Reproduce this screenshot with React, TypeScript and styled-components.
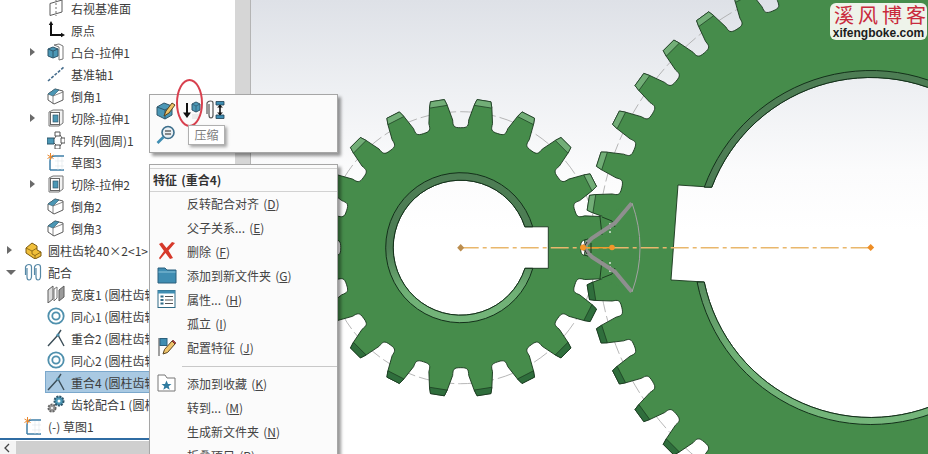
import * as React from 'react'
import styled, {createGlobalStyle} from 'styled-components'

const GlobalStyle = createGlobalStyle`
  html, body {
    margin: 0;
    padding: 0;
    background: #fff;
  }
`

const Page = styled.div`
  position: relative;
  display: flex;
  width: 928px;
  height: 454px;
  overflow: hidden;
  font-family: "Noto Sans CJK SC", "Liberation Sans", sans-serif;
  font-size: 12px;
  color: #3c3c3c;
`

/* ---------- feature tree ---------- */

const Panel = styled.div`
  display: flex;
  flex-direction: column;
  flex: 0 0 251px;
  width: 251px;
  min-width: 0;
  height: 454px;
  overflow: hidden;
  border-right: 1px solid #b4b4b4;
  box-sizing: border-box;
  background: #fff;
`
const PanelBody = styled.div`
  display: flex;
  flex: 0 0 440px;
  min-height: 0;
  overflow: hidden;
  box-sizing: border-box;
  border-bottom: 2px solid #2f6ca3;
`
const Tree = styled.div`
  flex: 1;
  min-width: 0;
  margin-top: -3px;
  overflow: hidden;
`
const VScroll = styled.div`
  flex: 0 0 15px;
  background: #d6d6d6;
`
const HScroll = styled.div`
  display: flex;
  flex: 1;
  margin-top: 1px;
  background: #cfcfcf;
`
const ScrollArrow = styled.div`
  flex: 0 0 16px;
  background: #f4f4f4;
  display: flex;
  align-items: center;
  justify-content: center;
  padding-right: 3px;
  box-sizing: border-box;
`
const Row = styled.div<{$level: number}>`
  display: flex;
  align-items: center;
  height: 22px;
  padding-left: ${p => (p.$level === 1 ? 5 : 28)}px;
  white-space: nowrap;
`
const Toggle = styled.span`
  flex: 0 0 19px;
  display: flex;
  padding-left: 2px;
  box-sizing: border-box;
`
const Caret = styled.span<{$open?: boolean}>`
  width: 0;
  height: 0;
  ${p =>
    p.$open
      ? `border-left: 5px solid transparent;
         border-right: 5px solid transparent;
         border-top: 5px solid #6a6a6a;
         margin-left: -1px;`
      : `border-top: 4.5px solid transparent;
         border-bottom: 4.5px solid transparent;
         border-left: 5px solid #6a6a6a;`}
`
const Label = styled.div<{$selected?: boolean}>`
  display: flex;
  align-items: center;
  gap: 6px;
  flex: 1;
  min-width: 0;
  height: 22px;
  margin-left: -2px;
  padding-left: 2px;
  box-sizing: border-box;
  background: ${p => (p.$selected ? '#a9c9e2' : 'transparent')};
  box-shadow: ${p => (p.$selected ? 'inset 0 0 0 1px #7ba8cc' : 'none')};
`
const LabelText = styled.span<{$level: number}>`
  display: block;
  overflow: hidden;
  max-width: ${p => (p.$level === 1 ? 101 : 78)}px;
`
const IconBox = styled.svg`
  flex: 0 0 18px;
  width: 18px;
  height: 18px;
  display: block;
`

/* ---------- pop-ups ---------- */

const Toolbar = styled.div`
  position: absolute;
  left: 149px;
  top: 94px;
  width: 189px;
  height: 59px;
  box-sizing: border-box;
  padding: 5px 6px;
  background: #fbfbfb;
  border: 1px solid #a6a6a6;
  box-shadow: 3px 3px 3px rgba(0, 0, 0, 0.4);
  display: grid;
  grid-template-columns: repeat(3, 20px);
  grid-auto-rows: 20px;
  gap: 5px;
`
const ToolIcon = styled.svg`
  width: 20px;
  height: 20px;
  display: block;
`
const Tooltip = styled.div`
  position: absolute;
  left: 188px;
  top: 125px;
  width: 37px;
  height: 20px;
  box-sizing: border-box;
  border: 1px solid #b0b0b0;
  background: #fff;
  box-shadow: 2px 2px 3px rgba(0, 0, 0, 0.35);
  color: #7d7d7d;
  text-align: center;
  line-height: 18px;
`
const RedMark = styled.div`
  position: absolute;
  left: 176px;
  top: 79px;
  width: 27px;
  height: 48px;
  box-sizing: border-box;
  border: 2px solid #d8404e;
  border-radius: 50%;
`
const Menu = styled.div`
  position: absolute;
  left: 149px;
  top: 164px;
  width: 189px;
  height: 310px;
  box-sizing: border-box;
  padding-top: 3px;
  background: #fbfbfb;
  border: 1px solid #a6a6a6;
  box-shadow: 3px 3px 3px rgba(0, 0, 0, 0.4);
`
const MenuTitle = styled.div`
  height: 22px;
  line-height: 22px;
  padding-left: 3px;
  border-top: 1px solid #d2d2d2;
  border-bottom: 1px solid #d2d2d2;
  font-weight: 700;
  word-spacing: 1.5px;
  color: #333;
`
const MenuItem = styled.div`
  display: grid;
  grid-template-columns: 37px 1fr;
  align-items: center;
  height: 24px;
  padding-bottom: 2px;
  box-sizing: border-box;
  color: #444;
  white-space: nowrap;
  word-spacing: 1.5px;
  u {
    text-underline-offset: 1px;
  }
`
const MenuIconSlot = styled.span`
  padding-left: 7px;
`
const MenuDivider = styled.div`
  height: 1px;
  margin: 6px 0 5px 32px;
  background: #c8c8c8;
`

/* ---------- graphics area ---------- */

const Viewport = styled.div`
  flex: 0 0 677px;
  min-width: 0;
  overflow: hidden;
  background: linear-gradient(#dee1e7 0, #eef0f3 90px, #fbfbfc 170px, #fff 230px);
`
const Scene = styled.svg`
  display: block;
  width: 677px;
  height: 454px;
`
const Watermark = styled.div`
  position: absolute;
  right: 1px;
  top: 3px;
  width: 97px;
  height: 37px;
  box-sizing: border-box;
  padding-top: 1px;
  background: #eef3ea;
  border-radius: 6px;
  text-align: center;
`
const WatermarkTitle = styled.div`
  height: 22px;
  line-height: 22px;
  font-size: 20px;
  letter-spacing: 4px;
  padding-left: 4px;
  color: #c92a3c;
  white-space: nowrap;
  margin-bottom: 1px;
`
const WatermarkUrl = styled.div`
  line-height: 13px;
  font-family: "Liberation Sans", sans-serif;
  font-weight: 700;
  font-size: 12px;
  color: #1c1c1c;
`

/* ---------- gear geometry ---------- */

type GearSpec = {
  cx: number
  cy: number
  pitch: number
  offset: number
  rt: number
  rc: number
  r1: number
  rr: number
  ht: number
  hc: number
  h1: number
}

const pt = (g: {cx: number; cy: number}, r: number, deg: number) => {
  const t = (deg * Math.PI) / 180
  return `${(g.cx + r * Math.cos(t)).toFixed(2)} ${(g.cy - r * Math.sin(t)).toFixed(2)}`
}

const small: GearSpec = {cx: 460.7, cy: 247.7, pitch: 18, offset: 9, rt: 149, rc: 143, r1: 128, rr: 120, ht: 2.7, hc: 3.6, h1: 5.4}
const big: GearSpec = {cx: 870.7, cy: 247.5, pitch: 9, offset: 0, rt: 286, rc: 280, r1: 264, rr: 256, ht: 1.5, hc: 1.9, h1: 2.7}

const outline = (g: GearSpec) => {
  const n = Math.round(360 / g.pitch)
  const half = g.pitch / 2
  const rm = g.rr + (g.r1 - g.rr) * 0.3
  let d = `M${pt(g, g.rr, g.offset - half)}`
  for (let i = 0; i < n; i++) {
    const a = g.offset + i * g.pitch
    d += `C${pt(g, g.rr, a - g.h1)} ${pt(g, rm, a - g.h1)} ${pt(g, g.r1, a - g.h1)}`
    d += `L${pt(g, g.rc, a - g.hc)}L${pt(g, g.rt, a - g.ht)}L${pt(g, g.rt, a + g.ht)}L${pt(g, g.rc, a + g.hc)}L${pt(g, g.r1, a + g.h1)}`
    d += `C${pt(g, rm, a + g.h1)} ${pt(g, g.rr, a + g.h1)} ${pt(g, g.rr, a + half)}`
  }
  return d + 'Z'
}

const tipBands = (g: GearSpec) => {
  const n = Math.round(360 / g.pitch)
  const out: {d: string; fill: string}[] = []
  for (let i = 0; i < n; i++) {
    const a = g.offset + i * g.pitch
    const up = Math.sin((a * Math.PI) / 180) > 0
    out.push({
      d: `M${pt(g, g.rc, a - g.hc)}L${pt(g, g.rt, a - g.ht)}L${pt(g, g.rt, a + g.ht)}L${pt(g, g.rc, a + g.hc)}Z`,
      fill: up ? '#72ae77' : '#2f6e3c',
    })
  }
  return out
}

type Key = {side: 1 | -1; top: number; bottom: number; corners: [number, number][]}

const edgeX = (g: {cx: number; cy: number}, r: number, y: number, side: number) =>
  g.cx + side * Math.sqrt(r * r - (y - g.cy) * (y - g.cy))

const holePath = (g: GearSpec, r: number, k: Key) => {
  const sweep = k.side > 0 ? 0 : 1
  const body = `M${edgeX(g, r, k.top, k.side)} ${k.top}A${r} ${r} 0 1 ${sweep} ${edgeX(g, r, k.bottom, k.side)} ${k.bottom}`
  return body + k.corners.map(c => `L${c[0]} ${c[1]}`).join('') + 'Z'
}

const ringPath = (g: GearSpec, ro: number, ri: number, k: Key) => {
  const sweep = k.side > 0 ? 0 : 1
  return (
    `M${edgeX(g, ro, k.top, k.side)} ${k.top}A${ro} ${ro} 0 1 ${sweep} ${edgeX(g, ro, k.bottom, k.side)} ${k.bottom}` +
    `L${edgeX(g, ri, k.bottom, k.side)} ${k.bottom}A${ri} ${ri} 0 1 ${1 - sweep} ${edgeX(g, ri, k.top, k.side)} ${k.top}Z`
  )
}

const smallKey: Key = {side: 1, top: 226.8, bottom: 268.3, corners: [[548.3, 268.3], [548.3, 226.8]]}
const bigKey: Key = {side: -1, top: 187.2, bottom: 282, corners: [[671, 280], [678, 185]]}

const Gear: React.FC<{g: GearSpec; k: Key; ro: number; ri: number}> = ({g, k, ro, ri}) => (
  <g strokeLinejoin="round">
    <path d={outline(g) + holePath(g, ri, k)} fillRule="evenodd" fill="#468c4b" stroke="#17351c" strokeWidth={0.9} />
    {tipBands(g).map((b, i) => (
      <path key={i} d={b.d} fill={b.fill} stroke="#17351c" strokeWidth={0.7} />
    ))}
    <path d={ringPath(g, ro, ri, k)} fill="url(#ringShade)" stroke="#13301a" strokeWidth={1} />
  </g>
)

const GearScene: React.FC = () => (
  <Scene viewBox="251 0 677 454">
    <defs>
      <linearGradient id="ringShade" x1="0" y1="0" x2="0" y2="1">
        <stop offset="0" stopColor="#4d7d54" />
        <stop offset="0.5" stopColor="#4d7d54" />
        <stop offset="0.8" stopColor="#6fb075" />
        <stop offset="1" stopColor="#74b57a" />
      </linearGradient>
    </defs>
    <circle cx={460.7} cy={247.7} r={136} fill="none" stroke="#a4a4a4" strokeWidth={0.8} strokeDasharray="16 4" />
    <circle cx={870.7} cy={247.5} r={273} fill="none" stroke="#a4a4a4" strokeWidth={0.8} strokeDasharray="18 4" />
    <Gear g={small} k={smallKey} ro={75} ri={67.5} />
    <Gear g={big} k={bigKey} ro={177} ri={170} />
    {/* the two gears overlap where they mesh, so it reads as solid green */}
    <path d="M588 222L600 217L628 205V290L600 278L588 273Z" fill="#468c4b" />
    <path d="M600 217L602 235M602 217L612 221L615 227M600 278L602 260M602 278L612 274L615 268" fill="none" stroke="#17351c" strokeWidth={0.9} />
    <path d="M610 223V233M610 262V272" stroke="#fff" strokeWidth={1.2} strokeDasharray="2 2" />
    <path d="M460.7 247.7H870" fill="none" stroke="#e9b76c" strokeWidth={1.4} strokeDasharray="18 4 4 4" />
    <path d="M583 247.7H612" stroke="#ef9a2a" strokeWidth={1.4} />
    <path d="M631.7 203.3L615 223L591.7 238.3L583 247.5L591.7 256.7L615 271.7L631.7 291.7" fill="none" stroke="#8f8f8f" strokeWidth={4} strokeLinejoin="round" />
    <path d="M632 203Q648 248 632 292" fill="none" stroke="#a3a3a3" strokeWidth={1} />
    <path d="M587 242Q582 248 587 254M591 243V253" fill="none" stroke="#1c2a1c" strokeWidth={0.9} />
    <circle cx={583} cy={247.5} r={3} fill="#f3962a" />
    <circle cx={612} cy={247.5} r={2.8} fill="#f3962a" />
    <path d="M460.7 244l3.5 3.7-3.5 3.7-3.5-3.7z" fill="#bb8d4e" />
    <path d="M870.7 244l3.5 3.5-3.5 3.5-3.5-3.5z" fill="#ee8d25" />
  </Scene>
)

/* ---------- icons ---------- */

const blue = '#4b97b5'

const drawings: Record<string, React.ReactNode> = {
  plane: (
    <>
      <path d="M3 4.5L15 1V13L3 16.5Z" fill="#fff" stroke="#5b5b5b" />
      <path d="M9 0V17" stroke="#6d6d6d" strokeDasharray="2 2" />
    </>
  ),
  origin: (
    <>
      <path d="M4 2V14H16" fill="none" stroke="#111" strokeWidth={2} />
      <path d="M4 0L1.8 4H6.2ZM18 14L14 11.8V16.2Z" fill="#111" />
    </>
  ),
  extrude: (
    <>
      <path d="M7 2L12 1L16 3V16L12 17V4Z" fill="#fff" stroke="#777" />
      <path d="M1 6L6 4L11 6V13L6 15L1 13Z" fill={blue} stroke="#2f566b" />
      <path d="M1 6L6 8L11 6M6 8V15" fill="none" stroke="#2f566b" />
    </>
  ),
  axis: <path d="M1 16L17 2" stroke="#456c8c" strokeWidth={1.6} strokeDasharray="3 1.4" />,
  chamfer: (
    <>
      <path d="M1 7L8 2L16 4V13L7 17L1 13Z" fill="#fff" stroke="#5c5c5c" />
      <path d="M1 7L8 2L12 3L6 9Z" fill={blue} stroke="#3a6477" strokeWidth={0.7} />
      <path d="M6 9V17M6 9L16 5" fill="none" stroke="#6a6a6a" strokeWidth={0.8} />
    </>
  ),
  cut: (
    <>
      <path d="M2 3L6 1H16V14L12 17H2Z" fill="#f2f2f2" stroke="#777" />
      <rect x={3.5} y={3.5} width={9} height={12} fill="#fff" stroke="#666" />
      <rect x={6} y={6} width={5} height={7} fill={blue} stroke="#2f566b" strokeWidth={0.7} />
    </>
  ),
  pattern: (
    <>
      <path d="M0 7H7V13H0Z" fill={blue} stroke="#2f566b" />
      <path d="M8 1H13V5H8ZM8 14H13V18H8ZM14 7H18V12H14Z" fill="#fff" stroke="#555" />
      <path d="M7 8L9 5M7 12L9 14M13 4L15 7M13 15L15 12" stroke="#555" />
    </>
  ),
  sketch: (
    <>
      <path d="M3 17V8Q3 3 8 3H17M3 17H17" fill="none" stroke="#3f7fa8" strokeWidth={1.5} />
      <path d="M8 8H17M8 13H17M11 4V17M15 4V17" stroke="#dfe6ea" strokeWidth={0.6} />
      <path d="M3.5 0V7M0.5 2L6.5 5.5M6.5 2L0.5 5.5" stroke="#e8862c" strokeWidth={1} />
    </>
  ),
  part: (
    <>
      <path d="M2 7L8 2L13 5V9L17 11V15L11 18L2 12Z" fill="#f0bf3a" stroke="#7c5a10" />
      <path d="M2 7L8 10V13L11 14.5V18M8 10L13 7M11 14.5L17 11" fill="none" stroke="#7c5a10" strokeWidth={0.8} />
    </>
  ),
  mates: (
    <>
      <path d="M3 5V14Q3 17 5 17T7.5 14V4Q7.5 1.5 5 1.5T1.5 4V12" fill="none" stroke="#5688a6" strokeWidth={1.2} />
      <path d="M12 5V14Q12 17 14 17T16.5 14V4Q16.5 1.5 14 1.5T10.5 4V12" fill="none" stroke="#5688a6" strokeWidth={1.2} />
    </>
  ),
  width: (
    <>
      <path d="M1 5L6 1V14L1 18Z" fill="#dcdcdc" stroke="#5d5d5d" />
      <path d="M7 4L10 2V13L7 16Z" fill="#fff" stroke="#777" />
      <path d="M12 5L17 1V12L12 16Z" fill="#9b9b9b" stroke="#5d5d5d" />
    </>
  ),
  concentric: (
    <>
      <circle cx={9} cy={9} r={7.7} fill="none" stroke="#4f90ad" strokeWidth={1.8} />
      <circle cx={9} cy={9} r={3.7} fill="none" stroke="#4f90ad" strokeWidth={1.8} />
    </>
  ),
  coincident: (
    <>
      <path d="M1 17L11 6L17 17" fill="none" stroke="#3c4e58" strokeWidth={1.4} />
      <path d="M10 7L14 1" stroke="#3c4e58" strokeWidth={1.4} />
      <circle cx={11} cy={6} r={1.6} fill="#4f90ad" />
    </>
  ),
  gearMate: (
    <>
      <circle cx={12} cy={6} r={4.5} fill={blue} stroke="#2f566b" strokeWidth={2} strokeDasharray="2 1" />
      <circle cx={12} cy={6} r={1.5} fill="#fff" />
      <circle cx={5} cy={13} r={3.6} fill="#9b9b9b" stroke="#666" strokeWidth={1.8} strokeDasharray="2 1" />
      <circle cx={5} cy={13} r={1.1} fill="#fff" />
    </>
  ),
}

const TreeIcon: React.FC<{name: string}> = ({name}) => <IconBox viewBox="0 0 18 18">{drawings[name]}</IconBox>

const menuDrawings: Record<string, React.ReactNode> = {
  remove: <path d="M2 3L5 1.5L9.5 7L15 1L18 2L11.5 9.5L16 17L13 18L8.5 12L3 18.5L2 17L7 10Z" fill="#d6392b" />,
  folder: (
    <>
      <path d="M1 3H8L10 5H19V18H1Z" fill="#3f8db2" stroke="#2a5f7c" />
      <path d="M1.5 7H18.5" stroke="#8cc3da" />
    </>
  ),
  props: (
    <>
      <rect x={1} y={1.5} width={17} height={17} fill="#fff" stroke="#2f6a86" />
      <rect x={1} y={1.5} width={17} height={3} fill="#3f8db2" />
      <path d="M3.5 7.5H6.5M3.5 11H6.5M3.5 14.500H6.5" stroke="#2f6a86" strokeWidth={2} />
      <path d="M8 7.500H16M8 11H16M8 14.500H16" stroke="#555" />
    </>
  ),
  config: (
    <>
      <path d="M2 1V19" stroke="#444" />
      <rect x={3} y={1.500} width={7} height={7} fill="#3f8db2" stroke="#2a5f7c" />
      <path d="M6 17L7.500 12.500L15 4L18 7L10.500 15.500Z" fill="#eec36a" stroke="#5a4520" />
      <path d="M15 4L16 3L19 6L18 7Z" fill="#b8413c" stroke="#5a2020" strokeWidth={0.6} />
    </>
  ),
  favorite: (
    <>
      <path d="M1 2H8L10 5H18V18H1Z" fill="#fff" stroke="#777" />
      <path d="M9.500 7.500L11 11H14.500L11.700 13.200L12.700 16.700L9.500 14.700L6.300 16.700L7.300 13.200L4.500 11H8Z" fill="#2f7ba0" />
    </>
  ),
}

const MenuIcon: React.FC<{name?: string}> = ({name}) => (
  <MenuIconSlot>{name ? <ToolIcon viewBox="0 0 20 20">{menuDrawings[name]}</ToolIcon> : null}</MenuIconSlot>
)

/* ---------- data ---------- */

type TreeRow = {level: number; icon: string; text: string; caret?: 'open' | 'closed'; selected?: boolean}

const rows: TreeRow[] = [
  {level: 2, icon: 'plane', text: '右视基准面'},
  {level: 2, icon: 'origin', text: '原点'},
  {level: 2, icon: 'extrude', text: '凸台-拉伸1', caret: 'closed'},
  {level: 2, icon: 'axis', text: '基准轴1'},
  {level: 2, icon: 'chamfer', text: '倒角1'},
  {level: 2, icon: 'cut', text: '切除-拉伸1', caret: 'closed'},
  {level: 2, icon: 'pattern', text: '阵列(圆周)1'},
  {level: 2, icon: 'sketch', text: '草图3'},
  {level: 2, icon: 'cut', text: '切除-拉伸2', caret: 'closed'},
  {level: 2, icon: 'chamfer', text: '倒角2'},
  {level: 2, icon: 'chamfer', text: '倒角3'},
  {level: 1, icon: 'part', text: '圆柱齿轮40×2<1>', caret: 'closed'},
  {level: 1, icon: 'mates', text: '配合', caret: 'open'},
  {level: 2, icon: 'width', text: '宽度1 (圆柱齿轮'},
  {level: 2, icon: 'concentric', text: '同心1 (圆柱齿轮'},
  {level: 2, icon: 'coincident', text: '重合2 (圆柱齿轮'},
  {level: 2, icon: 'concentric', text: '同心2 (圆柱齿轮'},
  {level: 2, icon: 'coincident', text: '重合4 (圆柱齿轮', selected: true},
  {level: 2, icon: 'gearMate', text: '齿轮配合1 (圆柱'},
  {level: 1, icon: 'sketch', text: '(-) 草图1'},
]

type Entry = {text: string; key: string; icon?: string} | 'divider'

const menuEntries: Entry[] = [
  {text: '反转配合对齐', key: 'D'},
  {text: '父子关系...', key: 'E'},
  {text: '删除', key: 'F', icon: 'remove'},
  {text: '添加到新文件夹', key: 'G', icon: 'folder'},
  {text: '属性...', key: 'H', icon: 'props'},
  {text: '孤立', key: 'I'},
  {text: '配置特征', key: 'J', icon: 'config'},
  'divider',
  {text: '添加到收藏', key: 'K', icon: 'favorite'},
  {text: '转到...', key: 'M'},
  {text: '生成新文件夹', key: 'N'},
  {text: '折叠项目', key: 'P'},
]

export default function App() {
  return (
    <Page>
      <GlobalStyle />
      <Panel>
        <PanelBody>
          <Tree>
            {rows.map((r, i) => (
              <Row key={i} $level={r.level}>
                <Toggle>{r.caret ? <Caret $open={r.caret === 'open'} /> : null}</Toggle>
                <Label $selected={r.selected}>
                  <TreeIcon name={r.icon} />
                  <LabelText $level={r.level}>{r.text}</LabelText>
                </Label>
              </Row>
            ))}
          </Tree>
          <VScroll />
        </PanelBody>
        <HScroll>
          <ScrollArrow>
            <svg width="6" height="10" viewBox="0 0 6 10">
              <path d="M5 1L1 5L5 9" fill="none" stroke="#444" strokeWidth={1.3} />
            </svg>
          </ScrollArrow>
        </HScroll>
      </Panel>
      <Viewport>
        <GearScene />
      </Viewport>

      <Toolbar>
        <ToolIcon viewBox="0 0 20 20">
          <path d="M1 7L8 3L16 6V15L9 19L1 15Z" fill="#4b97b5" stroke="#2f566b" />
          <path d="M1 7L9 10V19M9 10L16 6" fill="none" stroke="#2f566b" />
          <path d="M8 16L10 11L16 3L19 5L13 13Z" fill="#eec36a" stroke="#5a4520" />
        </ToolIcon>
        <ToolIcon viewBox="0 0 20 20">
          <path d="M6 3V14" stroke="#111" strokeWidth={2} />
          <path d="M2 12.500H10L6 18Z" fill="#111" />
          <path d="M11 4L15 2L19 4V10L15 12L11 10Z" fill="#4b97b5" stroke="#2f566b" />
          <path d="M11 4L15 6L19 4M15 6V12" fill="none" stroke="#2f566b" strokeWidth={0.7} />
          <path d="M11 14H18V19H11Z" fill="#ececec" />
        </ToolIcon>
        <ToolIcon viewBox="0 0 20 20">
          <path d="M3 4V15Q3 18 5 18T7 15V3Q7 1 4.500 1T1 3V14" fill="none" stroke="#555" strokeWidth={1.2} />
          <path d="M10 1.500H18V5H10ZM10 15H18V18.500H10Z" fill="#3f8db2" stroke="#1e3f52" strokeWidth={0.8} />
          <path d="M14 5V15" stroke="#111" strokeWidth={1.6} />
          <path d="M11 7.500L14 5L17 7.500ZM11 12.500L14 15L17 12.500Z" fill="#111" />
        </ToolIcon>
        <ToolIcon viewBox="0 0 20 20">
          <circle cx={12} cy={7.500} r={6} fill="#e8eef2" stroke="#3d6f8c" strokeWidth={1.600} />
          <path d="M9 6H15M9 9H15" stroke="#222" strokeWidth={1.200} />
          <path d="M7.500 12L1.500 18" stroke="#3f8db2" strokeWidth={2.600} />
        </ToolIcon>
      </Toolbar>
      <RedMark />
      <Tooltip>压缩</Tooltip>

      <Menu>
        <MenuTitle>特征 (重合4)</MenuTitle>
        {menuEntries.map((m, i) =>
          m === 'divider' ? (
            <MenuDivider key={i} />
          ) : (
            <MenuItem key={i}>
              <MenuIcon name={m.icon} />
              <span>
                {m.text} (<u>{m.key}</u>)
              </span>
            </MenuItem>
          ),
        )}
      </Menu>

      <Watermark>
        <WatermarkTitle>溪风博客</WatermarkTitle>
        <WatermarkUrl>xifengboke.com</WatermarkUrl>
      </Watermark>
    </Page>
  )
}
